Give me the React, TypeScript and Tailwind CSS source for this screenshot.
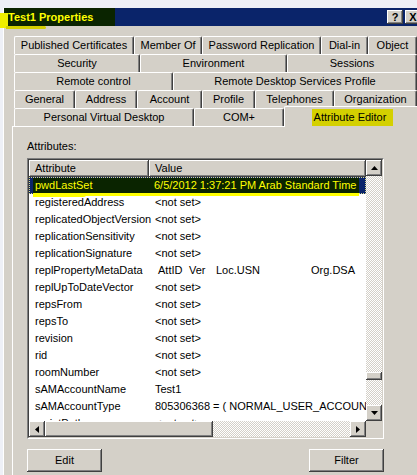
import React from 'react';

type TabDef = { label: string; w: number; selected?: boolean };

const tabRows: TabDef[][] = [
    [
        { label: 'Published Certificates', w: 120 },
        { label: 'Member Of', w: 68 },
        { label: 'Password Replication', w: 119 },
        { label: 'Dial-in', w: 47 },
        { label: 'Object', w: 49 },
    ],
    [
        { label: 'Security', w: 126 },
        { label: 'Environment', w: 147 },
        { label: 'Sessions', w: 130 },
    ],
    [
        { label: 'Remote control', w: 159 },
        { label: 'Remote Desktop Services Profile', w: 244 },
    ],
    [
        { label: 'General', w: 61 },
        { label: 'Address', w: 62 },
        { label: 'Account', w: 65 },
        { label: 'Profile', w: 53 },
        { label: 'Telephones', w: 79 },
        { label: 'Organization', w: 83 },
    ],
    [
        { label: 'Personal Virtual Desktop', w: 180 },
        { label: 'COM+', w: 90 },
        { label: 'Attribute Editor', w: 136, selected: true },
    ],
];

const rows: [string, string][] = [
    ['registeredAddress', '<not set>'],
    ['replicatedObjectVersion', '<not set>'],
    ['replicationSensitivity', '<not set>'],
    ['replicationSignature', '<not set>'],
    ['replPropertyMetaData', ''],
    ['replUpToDateVector', '<not set>'],
    ['repsFrom', '<not set>'],
    ['repsTo', '<not set>'],
    ['revision', '<not set>'],
    ['rid', '<not set>'],
    ['roomNumber', '<not set>'],
    ['sAMAccountName', 'Test1'],
    ['sAMAccountType', '805306368 = ( NORMAL_USER_ACCOUNT )'],
    ['scriptPath', '<not set>'],
];

// raised 3d edge like the classic windows controls
const raised =
    'bg-[#d4d0c8] shadow-[inset_-1px_-1px_0_#404040,inset_1px_1px_0_#ffffff,inset_-2px_-2px_0_#808080]';

function Arrow({ dir }: { dir: 'up' | 'down' | 'left' | 'right' }) {
    const pts = {
        up: '0,4 7,4 3.5,0',
        down: '0,0 7,0 3.5,4',
        left: '4,0 4,7 0,3.5',
        right: '0,0 0,7 4,3.5',
    }[dir];
    const vertical = dir === 'up' || dir === 'down';
    return (
        <svg width={vertical ? 7 : 4} height={vertical ? 4 : 7} viewBox={vertical ? '0 0 7 4' : '0 0 4 7'}>
            <polygon points={pts} fill="#000" />
        </svg>
    );
}

function Tab({ tab }: { tab: TabDef }) {
    if (tab.selected) {
        return (
            <div
                style={{ width: tab.w }}
                className="relative z-10 -mt-[2px] mb-[-1px] h-[21px] shrink-0 flex items-center justify-center bg-[#d4d0c8] border-t border-l border-white rounded-tl-[2px]"
            >
                <span className="bg-[#d4d000] pl-[2px] pr-[7px] leading-[17px]">{tab.label}</span>
            </div>
        );
    }
    return (
        <div
            style={{ width: tab.w }}
            className="h-[18px] shrink-0 flex items-center justify-center bg-[#d4d0c8] border-t border-l border-white border-r border-r-[#404040] shadow-[inset_-1px_0_0_#808080] rounded-tl-[2px] rounded-tr-[2px] whitespace-nowrap"
        >
            {tab.label}
        </div>
    );
}

export default function App() {
    return (
        <div className="relative w-[417px] h-[475px] overflow-hidden bg-[#eef0f7] pt-[8px] pl-[3px] font-['Liberation_Sans',Arial,sans-serif] text-[11px] text-black">
            {/* highlighter marks over the title */}
            <div className="absolute left-0 top-[13px] w-[8px] h-[15px] bg-[#eeee00]" />
            <div className="absolute left-[6px] top-[26px] w-[40px] h-[3px] bg-[#d4d000] rounded-r-full z-20" />

            <div className="w-[420px] h-full border-l border-white">
                {/* title bar */}
                <div className="h-[18px] bg-[#0a246a] flex items-center">
                    <div className="h-full w-[111px] bg-[#0a2400] pl-[4px] flex items-center font-bold text-[#ffff00] whitespace-nowrap">
                        Test1 Properties
                    </div>
                    <div className="ml-auto mr-[2px] flex items-center gap-[2px]">
                        <div className={`${raised} w-[16px] h-[14px] flex items-center justify-center font-bold text-[11px] leading-none`}>?</div>
                        <div className={`${raised} w-[16px] h-[14px] flex items-center justify-center font-bold text-[11px] leading-none`}>X</div>
                    </div>
                </div>

                {/* dialog body */}
                <div className="h-full bg-[#d4d0c8] pt-[10px] pl-[8px]">
                    <div className="ml-[2px] flex flex-col">
                        {tabRows.map((row, i) => (
                            <div key={i} className="flex h-[18px] items-end">
                                {row.map((t) => (
                                    <Tab key={t.label} tab={t} />
                                ))}
                            </div>
                        ))}
                    </div>

                    <div className="h-[400px] border-t border-l border-white pl-[14px] pt-[13px]">
                        <div className="leading-[13px]">Attributes:</div>

                        {/* list box */}
                        <div className="mt-[5px] w-[357px] h-[281px] border border-t-[#808080] border-l-[#808080] border-b-white border-r-white">
                            <div className="h-full border border-t-[#404040] border-l-[#404040] border-b-[#d4d0c8] border-r-[#d4d0c8] bg-white flex flex-col">
                                <div className="h-[261px] flex">
                                    <div className="w-[337px] overflow-hidden whitespace-nowrap">
                                        <div className="h-[17px] flex">
                                            <div className={`${raised} w-[120px] pl-[6px] flex items-center`}>Attribute</div>
                                            <div className={`${raised} flex-1 pl-[6px] flex items-center`}>Value</div>
                                        </div>

                                        {/* selected row, highlighted with a marker */}
                                        <div className="relative h-[17px] bg-[#0a246a] border border-dotted border-[#d8d890]">
                                            <div className="ml-[3px] w-[326px] h-full bg-[#0a2400] flex items-center text-[#ffff00]">
                                                <span className="w-[121px] pl-[2px] shrink-0">pwdLastSet</span>
                                                <span>6/5/2012 1:37:21 PM Arab Standard Time</span>
                                            </div>
                                            <div className="absolute left-[3px] top-full w-[326px] h-[3px] bg-[#ffff00] z-10" />
                                            <div className="absolute left-[3px] top-full w-[54px] h-[4px] bg-[#ffff00] rounded-br-full z-10" />
                                        </div>

                                        {rows.map(([name, value]) => (
                                            <div key={name} className="h-[17px] flex items-center">
                                                <span className="w-[120px] pl-[6px] shrink-0">{name}</span>
                                                {name === 'replPropertyMetaData' ? (
                                                    <span className="flex pl-[9px]">
                                                        <span className="w-[31px]">AttID</span>
                                                        <span className="w-[27px]">Ver</span>
                                                        <span className="w-[95px]">Loc.USN</span>
                                                        <span>Org.DSA</span>
                                                    </span>
                                                ) : (
                                                    <span className="pl-[6px]">{value}</span>
                                                )}
                                            </div>
                                        ))}
                                    </div>

                                    {/* vertical scrollbar */}
                                    <div className="w-[16px] flex flex-col">
                                        <div className={`${raised} h-[16px] flex items-center justify-center`}>
                                            <Arrow dir="up" />
                                        </div>
                                        <div className="flex-1 flex flex-col bg-[repeating-conic-gradient(#d4d0c8_0%_25%,#ffffff_0%_50%)] bg-[length:2px_2px]">
                                            <div className={`${raised} mt-[196px] h-[8px]`} />
                                        </div>
                                        <div className={`${raised} h-[16px] flex items-center justify-center`}>
                                            <Arrow dir="down" />
                                        </div>
                                    </div>
                                </div>

                                {/* horizontal scrollbar */}
                                <div className="h-[16px] flex">
                                    <div className={`${raised} w-[16px] flex items-center justify-center`}>
                                        <Arrow dir="left" />
                                    </div>
                                    <div className={`${raised} w-[168px]`} />
                                    <div className="flex-1 bg-[repeating-conic-gradient(#d4d0c8_0%_25%,#ffffff_0%_50%)] bg-[length:2px_2px]" />
                                    <div className={`${raised} w-[16px] flex items-center justify-center`}>
                                        <Arrow dir="right" />
                                    </div>
                                    <div className="w-[16px] bg-[#d4d0c8]" />
                                </div>
                            </div>
                        </div>

                        <div className="mt-[10px] w-[357px] flex justify-between">
                            <div className={`${raised} w-[75px] h-[23px] flex items-center justify-center`}>Edit</div>
                            <div className={`${raised} w-[75px] h-[23px] flex items-center justify-center`}>Filter</div>
                        </div>
                    </div>
                </div>
            </div>
        </div>
    );
}
